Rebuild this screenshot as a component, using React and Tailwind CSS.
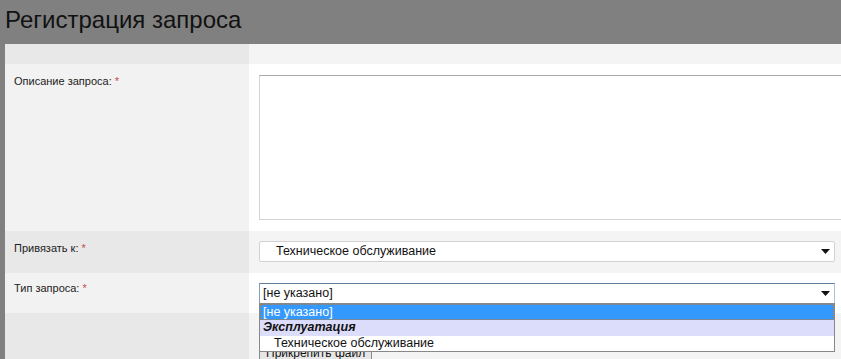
import React from 'react';

const Label = ({ children }) => (
  <span className="text-[11px] leading-[13px] text-[#222]">
    {children} <span className="text-[#c0504d]">*</span>
  </span>
);

const Arrow = () => (
  <svg width="9" height="5" viewBox="0 0 9 5" className="shrink-0">
    <path d="M0 0h9L4.5 5z" fill="#111" />
  </svg>
);

export default function App() {
  return (
    <div className="w-[841px] h-[359px] overflow-hidden bg-[#808080]" style={{ fontFamily: '"Liberation Sans", Arial, sans-serif' }}>
      {/* Header */}
      <div className="h-[44px] pl-[5px] pt-[6px]">
        <h1 className="text-[24px] leading-[28px] text-[#111]">
          Регистрация запроса
        </h1>
      </div>

      <div className="ml-[5px] grid grid-cols-[244px_1fr] relative">
        {/* top strip */}
        <div className="h-[20px] bg-[#e8e8e8]" />
        <div className="h-[20px] bg-[#f4f4f4]" />

        {/* description */}
        <div className="h-[167px] bg-[#f2f2f2] pl-[9px] pt-[11px] text-[11px] leading-[13px]">
          <Label>Описание запроса:</Label>
        </div>
        <div className="h-[167px] bg-white pl-[10px] pt-[11px] overflow-hidden">
          <div className="w-[620px] h-[145px] border border-[#d4d4d8] border-t-[#aaa]" />
        </div>

        {/* bind to */}
        <div className="h-[42px] bg-[#e8e8e8] pl-[9px] pt-[11px] text-[11px] leading-[13px]">
          <Label>Привязать к:</Label>
        </div>
        <div className="h-[42px] bg-[#f4f4f4] pl-[10px] pr-[6px] pt-[10px]">
          <div className="h-[21px] bg-white border border-[#cfd3d8] rounded-[2px] flex items-center pl-[16px] pr-[4px]">
            <span className="flex-1 text-[12.5px] text-[#111]">Техническое обслуживание</span>
            <Arrow />
          </div>
        </div>

        {/* type */}
        <div className="h-[40px] bg-[#f2f2f2] pl-[9px] pt-[9px] text-[11px] leading-[13px]">
          <Label>Тип запроса:</Label>
        </div>
        <div className="h-[40px] bg-white pl-[10px] pr-[6px] pt-[10px] relative">
          <div className="h-[21px] bg-white border border-[#a9c4de] border-t-[#5f7f9f] border-l-[#7f9fbf] flex items-center pl-[3px] pr-[4px]">
            <span className="flex-1 text-[12.5px] text-[#111]">[не указано]</span>
            <Arrow />
          </div>
          {/* open list */}
          <div className="absolute left-[10px] right-[6px] top-[30px] z-10 bg-white border border-[#888] text-[12.5px] leading-[15px]">
            <div className="h-[16px] bg-[#3399ff] text-white border border-dotted border-[#c07a30] pl-[2px]">[не указано]</div>
            <div className="h-[16px] bg-[#dcdcfb] font-bold italic text-[#111] pl-[3px]">Эксплуатация</div>
            <div className="h-[15px] text-[#111] pl-[14px]">Техническое обслуживание</div>
          </div>
        </div>

        {/* attach */}
        <div className="h-[60px] bg-[#e8e8e8]" />
        <div className="h-[60px] bg-[#f4f4f4] pl-[10px] pt-[27px]">
          <button className="h-[22px] px-[6px] text-[12px] text-[#111] bg-[#e6e6e6] border border-[#8a8a8a] rounded-[2px]">
            Прикрепить файл
          </button>
        </div>
      </div>
    </div>
  );
}
